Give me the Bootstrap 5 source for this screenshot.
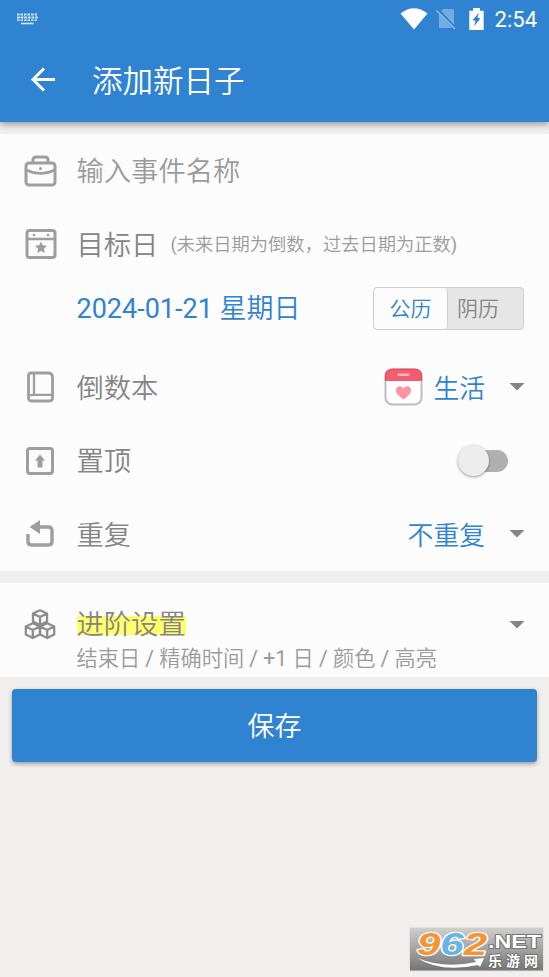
<!DOCTYPE html>
<html lang="zh-CN">
<head>
<meta charset="utf-8">
<meta name="viewport" content="width=device-width, initial-scale=1">
<title>添加新日子</title>
<link href="https://cdn.jsdelivr.net/npm/bootstrap@5.3.0/dist/css/bootstrap.min.css" rel="stylesheet">
<style>
  :root { --brand: #3083d0; --ink: #858585; --soft: #9b9b9b; }
  body { background: #f0efee; font-family: Roboto, "Noto Sans CJK SC DemiLight", "Noto Sans CJK SC", sans-serif; color: var(--ink); min-height: 977px; }
  svg { display: block; flex: none; }
  .app-header { background: var(--brand); height: 122px; box-shadow: 0 3px 6px rgba(0,0,0,.32); color: #fff; }
  .status { height: 38px; padding: 0 12px 0 17px; }
  .clock { font-size: 22px; line-height: 38px; padding-top: 1px; margin-left: 11px; }
  .battery { margin-left: 11px; }
  .titlebar { height: 84px; padding-left: 30px; }
  .titlebar h1 { font-size: 30.5px; line-height: 44px; margin: 0 0 0 36px; padding-top: 3px; font-weight: 400; }
  .panel { background: #fcfcfc; }
  .main-panel { margin-top: 12px; height: 437px; }
  .line { height: 73.4px; padding: 0 24px 0 23.5px; }
  .line-date { height: 54px; margin-bottom: 16px; padding-left: 76.5px; padding-right: 25px; }
  .glyph { width: 33px; margin-right: 20px; }
  .glyph svg { margin: 0 auto; }
  .label { font-size: 27.3px; line-height: 40px; white-space: nowrap; }
  .line .label, .line-date .label, .line .value { padding-top: 3px; }
  .date { font-size: 27px; }
  .soft { color: var(--soft); }
  .hint { font-size: 18.3px; margin-left: 12px; padding-top: 2px; white-space: nowrap; color: var(--soft); }
  .blue { color: var(--brand); }
  .value { font-size: 25.8px; line-height: 40px; }
  .book-name { margin-left: 10px; }
  .caret { margin-left: 24px; }
  .calendar-switch { width: 151px; height: 43px; margin-top: 1px; border: 1px solid #cfcfcf; border-radius: 4px; background: #e6e6e6; font-size: 21px; line-height: 43px; }
  .calendar-switch .on { width: 74px; height: 41px; background: #fcfcfc; color: var(--brand); border-right: 1px solid #cfcfcf; border-radius: 4px; text-align: center; }
  .calendar-switch .off { padding-left: 9px; }
  .toggle { width: 50px; height: 36px; margin-right: 17px; }
  .track { width: 44px; height: 22px; border-radius: 11px; background: #b0b0b0; }
  .knob { width: 31px; height: 31px; border-radius: 50%; background: #ececec; box-shadow: 0 1px 3px rgba(0,0,0,.4); margin-right: -25px; z-index: 1; }
  .more-panel { margin-top: 12px; height: 94px; padding: 21.500px 24px 0 23.500px; }
  .more-panel .label { background: linear-gradient(#ffff6b,#ffff6b) 0 11.500px / 100% 19px no-repeat; }
  .summary { font-size: 21.2px; line-height: 27px; color: var(--soft); white-space: nowrap; margin-left: 53px; }
  .save { margin: 12px 12px 0; width: 525px; height: 73px; background: var(--brand); color: #fff; border: 0; border-radius: 4px; padding-top: 10px; font-size: 27px; box-shadow: 0 2px 4px rgba(0,0,0,.35); }
  .save:hover { background: #2877c2; color: #fff; }
  .stamp { left: 409px; top: 927px; overflow: visible; }
</style>
</head>
<body class="position-relative">
<header class="app-header">
  <div class="status d-flex align-items-center">
    <svg width="22" height="12" viewBox="0 0 22 12" fill="none" stroke="#d5e8f6">
      <path d="M0 1.5h21" stroke-width="2" stroke-dasharray="2.5 1"/><path d="M0 4.5h21" stroke-width="2" stroke-dasharray="2.8 .8"/><path d="M0 7.3h21" stroke-width="1.6" stroke-dasharray="2.5 1"/><path d="M4 10.500h12.500" stroke-width="1.600"/>
    </svg>
    <svg class="ms-auto" width="28" height="22" viewBox="0 0 28 22"><path d="M0.500 5.500Q14-5 27.500 5.500L14 21.500Z" fill="#fff"/></svg>
    <svg class="ms-2" width="22" height="22" viewBox="0 0 22 22"><path d="M7 1h9.500q1.500 0 1.500 1.500V20H3V5z" fill="#73acdf"/><path d="M1 1l18.500 20" stroke="#3083d0" stroke-width="3.500"/><path d="M.5 2.500l18.500 18.500" stroke="#92bfe6" stroke-width="1.500"/></svg>
    <svg class="battery" width="15" height="22" viewBox="0 0 15 23"><path d="M4 0h7v3h4v20H0V3h4z" fill="#fff"/><path d="M10 5L3.500 12.500l3 1L5 19l6.500-8-3-1z" fill="#3083d0"/></svg>
    <span class="clock">2:54</span>
  </div>
  <div class="titlebar d-flex align-items-center">
    <svg width="26" height="26" viewBox="0 0 26 26" fill="none" stroke="#fff" stroke-width="3"><path d="M25 12.500H3M14 1.500l-11 11 11 11"/></svg>
    <h1>添加新日子</h1>
  </div>
</header>
<main>
  <section class="panel main-panel">
    <div class="line d-flex align-items-center">
      <span class="glyph"><svg width="33" height="32" viewBox="0 0 33 32" fill="none" stroke="#9e9e9e" stroke-width="3"><rect x="2" y="8" width="29" height="22" rx="3"/><path d="M9 8V5q0-3 3-3h9q3 0 3 3v3"/><path d="M2 15q14.500 7 29 0" stroke-width="2.500"/><circle cx="16.500" cy="13.500" r="1.500" fill="#9e9e9e" stroke="none"/></svg></span>
      <span class="label soft">输入事件名称</span>
    </div>
    <div class="line d-flex align-items-center">
      <span class="glyph"><svg width="33" height="30" viewBox="0 0 33 30" fill="none" stroke="#9e9e9e" stroke-width="3"><rect x="3" y="1.500" width="28" height="27" rx="2.500"/><path d="M3 10h28" stroke-width="2.500"/><g fill="#9e9e9e" stroke="none"><circle cx="10" cy="6" r="1.300"/><circle cx="24" cy="6" r="1.300"/><path d="M17 12.500l1.800 3.800 4.200.5-3 2.900.7 4.200-3.700-2-3.700 2 .7-4.200-3-2.900 4.200-.5z"/></g></svg></span>
      <span class="label">目标日</span><span class="hint">(未来日期为倒数，过去日期为正数)</span>
    </div>
    <div class="line-date d-flex align-items-center justify-content-between">
      <span class="label date blue">2024-01-21 星期日</span>
      <div class="calendar-switch d-flex"><span class="on">公历</span><span class="off">阴历</span></div>
    </div>
    <div class="line d-flex align-items-center">
      <span class="glyph"><svg width="27" height="32" viewBox="0 0 27 32" fill="none" stroke="#9e9e9e" stroke-width="2.800"><path d="M4 2h17q4.500 0 4.500 4.500V27q0 3-3 3H4.500q-3 0-3-3V4.500Q1.500 2 4 2z"/><path d="M2 25.500q.5-1.700 2.500-1.700h21M7 2v22" stroke-width="2.300"/></svg></span>
      <span class="label">倒数本</span>
      <svg class="ms-auto" width="39" height="38" viewBox="0 0 39 38"><rect x="1.500" y="1.500" width="36" height="35" rx="7" fill="#fff" stroke="#bdbdbd" stroke-width="2"/><path d="M.8 13V8q0-7.500 8-7.500h21.400q8 0 8 7.500v5z" fill="#f45c70"/><path d="M1.500 12V8q0-6.500 7-6.500h22q7 0 7 6.500v4" fill="none" stroke="#d95268"/><rect x="13.500" y="5.500" width="12" height="2.500" rx="1" fill="#fbb8c0"/><path d="M19.500 31.500C15 28 12 26 12 22.500c0-5 6-5.500 7.500-1.500 1.500-4 7.500-3.500 7.500 1.500 0 3.500-3 5.500-7.500 9z" fill="#fe94a2"/></svg>
      <span class="value book-name blue">生活</span>
      <svg class="caret" width="16" height="8" viewBox="0 0 16 8"><path d="M.5 0h15L8 7.500z" fill="#858585"/></svg>
    </div>
    <div class="line d-flex align-items-center">
      <span class="glyph"><svg width="28" height="28" viewBox="0 0 28 28"><rect x="1.500" y="1.500" width="25" height="25" rx="2.500" fill="none" stroke="#9e9e9e" stroke-width="3"/><path d="M14 7.500l5 6h-2.500v7h-5v-7H9z" fill="#9e9e9e"/></svg></span>
      <span class="label">置顶</span>
      <div class="toggle ms-auto d-flex align-items-center justify-content-end"><span class="knob flex-shrink-0"></span><span class="track flex-shrink-0"></span></div>
    </div>
    <div class="line d-flex align-items-center">
      <span class="glyph"><svg width="28" height="28" viewBox="0 0 28 28"><path d="M2 14v7.500q0 3.500 3.500 3.500h17q3.500 0 3.500-3.500v-11q0-3.500-3.500-3.500H13" fill="none" stroke="#9e9e9e" stroke-width="3.400"/><path d="M3.500 7L14 0v14z" fill="#9e9e9e"/></svg></span>
      <span class="label">重复</span>
      <span class="value blue ms-auto">不重复</span>
      <svg class="caret" width="16" height="8" viewBox="0 0 16 8"><path d="M.5 0h15L8 7.500z" fill="#858585"/></svg>
    </div>
  </section>
  <section class="panel more-panel">
    <div class="d-flex align-items-center">
      <span class="glyph"><svg width="32" height="32" viewBox="0 0 32 32" fill="none" stroke="#8d8d8d" stroke-width="2.300" stroke-linejoin="round"><path id="cube" d="M16 1.300l7 3.200v8L16 16l-7-3.500v-8zM9 4.500L16 8l7-3.500M16 8v8"/><use href="#cube" x="-7.200" y="13"/><use href="#cube" x="7.200" y="13"/></svg></span>
      <span class="label">进阶设置</span>
      <svg class="ms-auto" width="16" height="8" viewBox="0 0 16 8"><path d="M.5 0h15L8 7.500z" fill="#858585"/></svg>
    </div>
    <div class="summary">结束日 / 精确时间 / +1 日 / 颜色 / 高亮</div>
  </section>
  <button class="save btn d-flex align-items-center justify-content-center" type="button">保存</button>
</main>
<svg class="stamp position-absolute" width="136" height="45" viewBox="0 0 136 45">
  <defs><linearGradient id="steel" x2="0" y2="1"><stop stop-color="#d0d0ce"/><stop offset="1" stop-color="#747474"/></linearGradient></defs>
  <rect x=".5" y=".5" width="134" height="43.500" fill="url(#steel)" stroke="#e2e2e2"/>
  <path d="M8 31Q35 42 67 35l-2-3 10-1-4 9-2-2Q32 46 8 31z" fill="#fff"/>
  <g font-family="Liberation Sans, sans-serif" font-weight="700" paint-order="stroke" stroke-linejoin="round">
    <text x="8" y="28" font-size="32" font-style="italic" textLength="70" lengthAdjust="spacingAndGlyphs" stroke="#fff" stroke-width="2.500" fill="#f79331">9<tspan fill="#64b5e8">6</tspan>2</text>
    <text x="79" y="21" font-size="18" textLength="53" lengthAdjust="spacingAndGlyphs" stroke="#777" stroke-width="2" fill="#fff">.NET</text>
    <text x="79" y="39" font-size="14" textLength="50" font-family="Noto Sans CJK SC, sans-serif" stroke="#666" stroke-width="1.500" fill="#fff">乐游网</text>
  </g>
</svg>
<script src="https://cdn.jsdelivr.net/npm/bootstrap@5.3.0/dist/js/bootstrap.bundle.min.js"></script>
</body>
</html>
